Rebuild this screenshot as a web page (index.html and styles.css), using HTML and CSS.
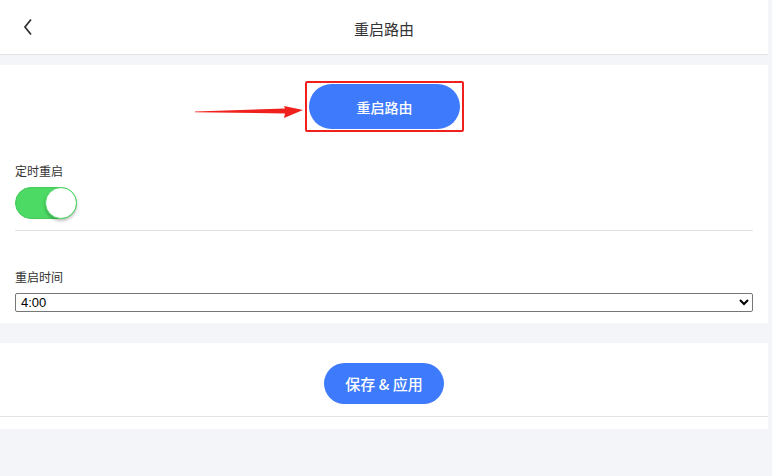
FILE: index.html
```html
<!DOCTYPE html>
<html lang="zh-CN">
<head>
<meta charset="utf-8">
<title>重启路由</title>
<link rel="stylesheet" href="styles.css">
</head>
<body>
<div class="page">
  <header class="topbar">
    <span class="back">
      <svg width="10" height="18" viewBox="0 0 10 18"><polyline points="8,1.5 2,9 8,16.5" fill="none" stroke="#333" stroke-width="1.8"/></svg>
    </span>
    <h1 class="title">重启路由</h1>
  </header>

  <section class="card card-main">
    <div class="reboot-row">
      <svg class="arrow" width="112" height="22" viewBox="0 0 112 22">
        <polygon points="0,11.5 90,8.6 89,6 108,10 89,18 90,13.4 0,12.3" fill="#f0211d"/>
      </svg>
      <div class="highlight">
        <button class="btn btn-reboot">重启路由</button>
      </div>
    </div>

    <div class="field">
      <div class="label">定时重启</div>
      <div class="switch on"><span class="knob"></span></div>
    </div>
    <div class="divider"></div>
    <div class="field field-time">
      <div class="label">重启时间</div>
      <select class="select">
        <option>4:00</option>
      </select>
    </div>
  </section>

  <section class="card card-save">
    <div class="save-row">
      <button class="btn btn-save">保存 &amp; 应用</button>
    </div>
    <div class="full-line"></div>
  </section>
</div>
</body>
</html>
```

FILE: styles.css
```css
* { box-sizing: border-box; }
html, body { margin: 0; padding: 0; }
body {
  background: #f4f5f9;
  font-family: "Noto Sans CJK SC", "Noto Sans", "Liberation Sans", sans-serif;
  color: #333;
  width: 772px;
  height: 476px;
  overflow: hidden;
}
.page { width: 768px; }

.topbar {
  height: 55px;
  background: #fff;
  border-bottom: 1px solid #e1e2e4;
  display: flex;
  align-items: center;
  justify-content: center;
  position: relative;
}
.back {
  position: absolute;
  left: 23px;
  top: 18px;
  display: block;
  width: 10px;
  height: 18px;
}
.back svg { display: block; }
.title {
  margin: 0;
  font-size: 15px;
  font-weight: normal;
  color: #333;
  line-height: 20px;
  padding-top: 4px;
}

.card { background: #fff; }
.card-main {
  margin-top: 10px;
  padding: 16px 15px 11px;
}
.reboot-row {
  position: relative;
  display: flex;
  justify-content: center;
}
.arrow {
  position: absolute;
  left: 180px;
  top: 19px;
}
.highlight {
  border: 2px solid #f0211d;
  border-radius: 2px;
  padding: 1px 2px;
  margin-left: 1px;
}
.btn {
  border: none;
  background: #3e7bfc;
  color: #fff;
  font-family: "Noto Sans CJK SC", "Noto Sans", sans-serif;
  display: block;
  cursor: pointer;
  padding: 0;
}
.btn-reboot {
  width: 151px;
  height: 45px;
  border-radius: 23px;
  font-size: 14px;
  font-weight: 500;
}

.field { display: flex; flex-direction: column; align-items: flex-start; }
.label {
  font-size: 12px;
  line-height: 17px;
  color: #333;
}
.reboot-row + .field { margin-top: 30px; }
.switch {
  margin-top: 8px;
  width: 62px;
  height: 32px;
  border-radius: 16px;
  background: #4cd964;
  border: 1px solid #45c95b;
  position: relative;
}
.knob {
  position: absolute;
  right: -1px;
  top: -1px;
  width: 32px;
  height: 32px;
  border-radius: 50%;
  background: #fff;
  border: 1px solid #4cd964;
  box-shadow: 0 2px 3px rgba(0,0,0,0.25);
}
.divider {
  margin-top: 11px;
  height: 1px;
  background: #e3e3e3;
}
.field-time { margin-top: 37px; align-items: stretch; }
.select {
  margin-top: 8px;
  width: 738px;
  height: 19px;
  font-family: "Liberation Sans", Arial, sans-serif;
  font-size: 13px;
  color: #000;
  background: #fff;
  border: 1px solid #767676;
  border-radius: 2px;
  padding: 0 0 0 1px;
}

.card-save {
  margin-top: 20px;
  padding-top: 20px;
  padding-bottom: 12px;
}
.save-row { display: flex; justify-content: center; }
.btn-save {
  width: 120px;
  height: 41px;
  border-radius: 21px;
  font-size: 15px;
  font-weight: 500;
}
.full-line {
  margin-top: 12px;
  height: 1px;
  background: #e3e3e3;
}
```
